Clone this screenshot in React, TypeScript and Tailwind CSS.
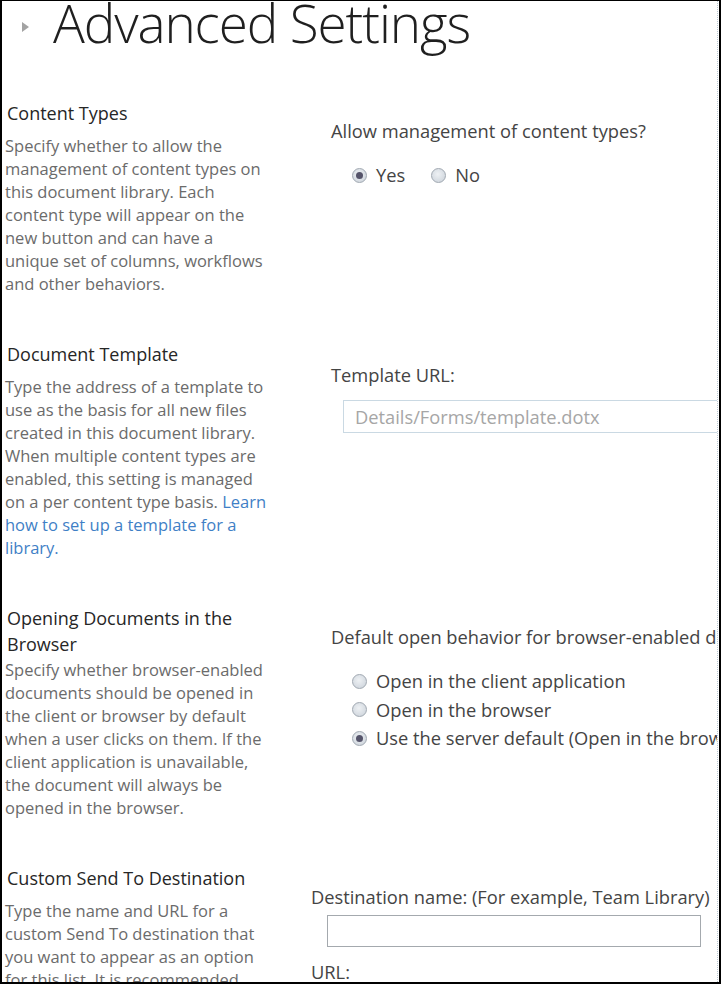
const FONT = "font-['Open_Sans','Noto_Sans',sans-serif]";

function Header({ lines }: { lines: string[] }) {
  return (
    <div className="ml-[5px] text-[18px] leading-[26px] text-[#262626] whitespace-nowrap">
      {lines.map((l) => (
        <div key={l}>{l}</div>
      ))}
    </div>
  );
}

function Desc({ lines, className = "" }: { lines: React.ReactNode[]; className?: string }) {
  return (
    <div className={`ml-[3px] text-[16.5px] leading-[23px] text-[#6b6b6b] whitespace-nowrap ${className}`}>
      {lines.map((l, i) => (
        <div key={i}>{l}</div>
      ))}
    </div>
  );
}

function Radio({ checked }: { checked?: boolean }) {
  return (
    <span className="inline-flex h-[15px] w-[15px] shrink-0 items-center justify-center rounded-full border border-[#a0a8b1] bg-[radial-gradient(circle_at_45%_40%,#eef1f4,#c9d0d8)]">
      {checked && <span className="h-[7px] w-[7px] rounded-full bg-[#55546a]" />}
    </span>
  );
}

function RadioOption({ label, checked, className = "" }: { label: string; checked?: boolean; className?: string }) {
  return (
    <label className={`flex items-center gap-[9px] whitespace-nowrap ${className}`}>
      <Radio checked={checked} />
      <span>{label}</span>
    </label>
  );
}

export default function App() {
  return (
    <div className={`${FONT} h-[984px] w-[721px] overflow-hidden bg-white`}>
      <div className="h-full w-full overflow-hidden border-t border-b-2 border-l-2 border-r-2 border-black">
        <div className="h-full w-[716px] overflow-hidden border-r border-dotted border-[#b9c6d0]">
          {/* title */}
          <div className="flex h-[60px] items-start">
            <span className="mt-[21px] ml-[20px] h-0 w-0 border-y-[5px] border-l-[7px] border-y-transparent border-l-[#a3a3a3]" />
            <h1 className="ml-[24px] -mt-[13px] text-[53px] font-light leading-[70px] tracking-[-1.1px] text-[#1f1f1f] whitespace-nowrap">
              Advanced Settings
            </h1>
          </div>

          {/* Content Types */}
          <section className="mt-[39px] flex">
            <div className="w-[280px] shrink-0">
              <Header lines={["Content Types"]} />
              <Desc
                className="mt-[8px]"
                lines={[
                  "Specify whether to allow the",
                  "management of content types on",
                  "this document library. Each",
                  "content type will appear on the",
                  "new button and can have a",
                  "unique set of columns, workflows",
                  "and other behaviors.",
                ]}
              />
            </div>
            <div className="pl-[49px] pt-[18px] text-[18.3px] leading-[26px] text-[#444]">
              <div className="whitespace-nowrap">Allow management of content types?</div>
              <div className="mt-[19px] ml-[21px] flex h-[24px] items-center">
                <RadioOption label="Yes" checked />
                <RadioOption label="No" className="ml-[26px]" />
              </div>
            </div>
          </section>

          {/* Document Template */}
          <section className="mt-[46px] flex">
            <div className="w-[280px] shrink-0">
              <Header lines={["Document Template"]} />
              <Desc
                className="mt-[8px]"
                lines={[
                  "Type the address of a template to",
                  "use as the basis for all new files",
                  "created in this document library.",
                  "When multiple content types are",
                  "enabled, this setting is managed",
                  <>
                    on a per content type basis. <a className="text-[#3f7fc6]">Learn</a>
                  </>,
                  <a className="text-[#3f7fc6]">how to set up a template for a</a>,
                  <a className="text-[#3f7fc6]">library.</a>,
                ]}
              />
            </div>
            <div className="pl-[49px] pt-[21px] text-[18.3px] leading-[26px] text-[#444]">
              <div className="whitespace-nowrap">Template URL:</div>
              <div className="mt-[12px] ml-[12px] flex h-[33px] w-[390px] items-center border border-[#cad9e3] px-[11px] text-[18.3px] text-[#a6a6a6] whitespace-nowrap">
                Details/Forms/template.dotx
              </div>
            </div>
          </section>

          {/* Opening Documents in the Browser */}
          <section className="mt-[46px] flex">
            <div className="w-[280px] shrink-0">
              <Header lines={["Opening Documents in the", "Browser"]} />
              <Desc
                className="mt-[1px]"
                lines={[
                  "Specify whether browser-enabled",
                  "documents should be opened in",
                  "the client or browser by default",
                  "when a user clicks on them. If the",
                  "client application is unavailable,",
                  "the document will always be",
                  "opened in the browser.",
                ]}
              />
            </div>
            <div className="pl-[49px] pt-[19px] text-[18.3px] leading-[26px] text-[#444]">
              <div className="whitespace-nowrap">Default open behavior for browser-enabled documents:</div>
              <div className="mt-[17px] ml-[21px]">
                <RadioOption label="Open in the client application" className="h-[28px]" />
                <RadioOption label="Open in the browser" className="h-[29px]" />
                <RadioOption label="Use the server default (Open in the browser)" checked className="h-[28px]" />
              </div>
            </div>
          </section>

          {/* Custom Send To Destination */}
          <section className="mt-[46px] flex">
            <div className="w-[280px] shrink-0">
              <Header lines={["Custom Send To Destination"]} />
              <Desc
                className="mt-[8px]"
                lines={[
                  "Type the name and URL for a",
                  "custom Send To destination that",
                  "you want to appear as an option",
                  "for this list. It is recommended",
                  "that you choose a short name.",
                ]}
              />
            </div>
            <div className="pl-[29px] pt-[19px] text-[18.3px] leading-[26px] text-[#444]">
              <div className="whitespace-nowrap">Destination name: (For example, Team Library)</div>
              <div className="mt-[5px] ml-[16px] h-[32px] w-[374px] border border-[#a4a9ae]" />
              <div className="mt-[12px] whitespace-nowrap">URL:</div>
            </div>
          </section>
        </div>
      </div>
    </div>
  );
}
